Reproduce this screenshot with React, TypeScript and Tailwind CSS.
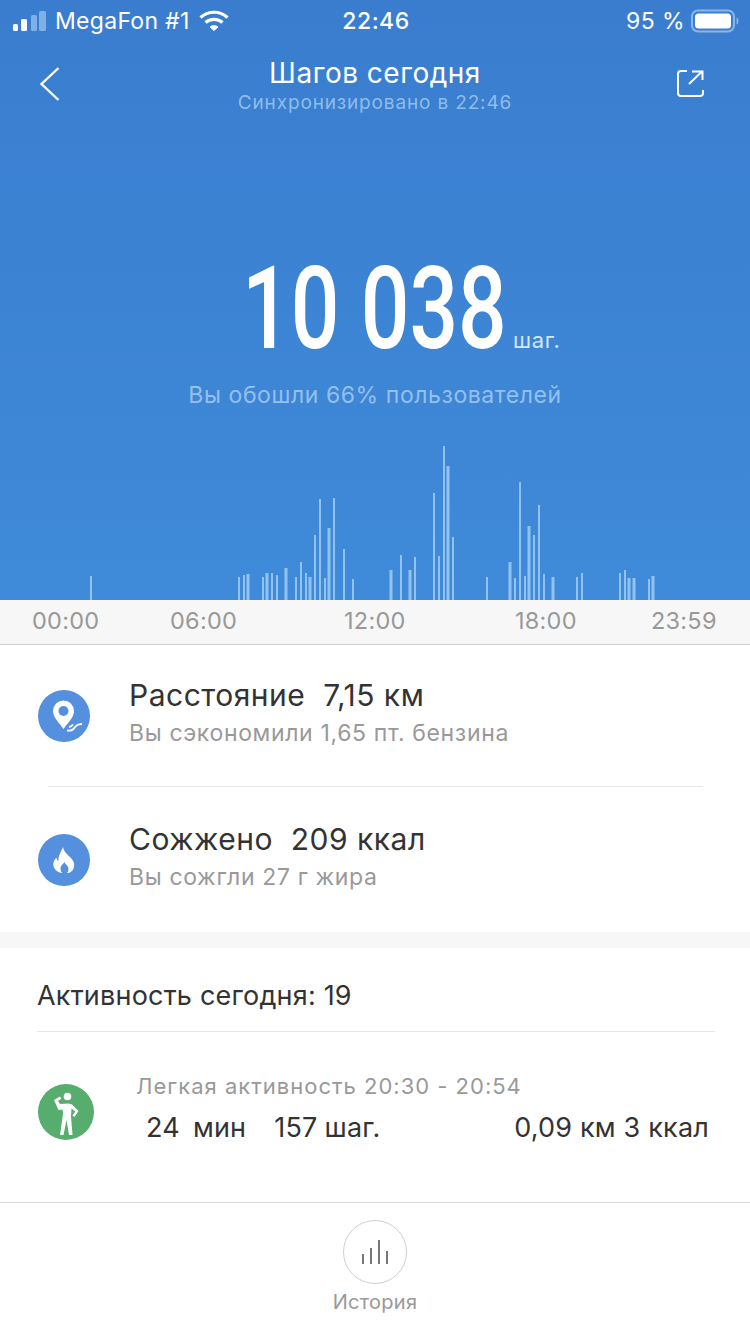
import type { ReactNode } from "react";

const bars: [number, number, number][] = [
  [91, 2, 576], [239, 2, 577], [244, 2, 575], [248, 3, 574], [263, 2, 577], [267, 3, 573], [272, 2, 573], [277, 2, 575],
  [286, 3, 568], [296, 2, 577], [301, 2, 562], [306, 2, 573], [310, 3, 577], [315, 2, 535], [320, 2, 499], [325, 2, 578],
  [329, 3, 528], [334, 2, 498], [344, 2, 549], [353, 2, 579], [391, 3, 570], [401, 2, 555], [410, 3, 570], [415, 2, 557],
  [434, 2, 493], [439, 2, 556], [444, 2, 446], [448, 3, 466], [453, 2, 537], [487, 2, 577], [510, 3, 562], [515, 2, 578],
  [520, 2, 482], [525, 2, 576], [529, 3, 526], [534, 2, 535], [539, 2, 505], [544, 2, 574], [553, 3, 577], [577, 2, 577],
  [582, 2, 573], [620, 2, 573], [625, 2, 570], [629, 3, 578], [634, 3, 578], [649, 2, 579], [653, 3, 576],
];

function StatusBar() {
  return (
    <div className="flex h-10 items-center justify-between pl-[13px] pr-[11px] pt-[2px] text-white">
      <div className="flex w-[300px] items-center">
        <svg width="34" height="22" viewBox="0 0 34 22">
          <rect x="0" y="14" width="5" height="7" rx="1.5" fill="#fff" />
          <rect x="8" y="9" width="6" height="12" rx="1.5" fill="#fff" />
          <rect x="18" y="5" width="6" height="16" rx="1.5" fill="#7fb0e6" />
          <rect x="26" y="1" width="7" height="20" rx="1.5" fill="#7fb0e6" />
        </svg>
        <span className="ml-[8px] text-[23px] leading-none tracking-[0.3px]">MegaFon #1</span>
        <svg className="ml-[9px]" width="30" height="22" viewBox="0 0 30 22" fill="none" stroke="#fff" strokeWidth="3.2">
          <path d="M1.5 7.5C9 .5 21 .5 28.5 7.5" />
          <path d="M6.5 12.5C11 8.3 19 8.3 23.5 12.5" />
          <path d="M11 17 15 20.5 19 17C17 15.2 13 15.2 11 17Z" fill="#fff" stroke="#fff" strokeWidth="1" />
        </svg>
      </div>
      <span className="text-[23px] font-medium leading-none tracking-[0.5px]">22:46</span>
      <div className="flex w-[300px] items-center justify-end">
        <span className="text-[23px] leading-none tracking-[0.4px]">95 %</span>
        <svg className="ml-[6px]" width="48" height="24" viewBox="0 0 48 24">
          <rect x="1" y="1.5" width="42" height="21" rx="6" fill="none" stroke="#8bb6e8" strokeWidth="2" />
          <rect x="4" y="4.5" width="36" height="15" rx="3.5" fill="#fff" />
          <path d="M45.5 8.5c1.5.5 2 2 2 3.5s-.5 3-2 3.5z" fill="#8bb6e8" />
        </svg>
      </div>
    </div>
  );
}

function NavBar() {
  return (
    <div className="flex h-[78px] justify-between px-[39px]">
      <div className="w-[60px] pt-[26px]">
        <svg width="22" height="36" viewBox="0 0 22 36" fill="none" stroke="#fff" strokeWidth="2.4">
          <path d="M19.5 2 2.5 18 19.5 34" />
        </svg>
      </div>
      <div className="flex flex-col items-center pt-[15px]">
        <span className="text-[28px] leading-[36px] tracking-[0.5px] text-white">Шагов сегодня</span>
        <span className="mt-[1px] text-[19px] leading-[22px] tracking-[0.85px] text-[#8fbcec]">Синхронизировано в 22:46</span>
      </div>
      <div className="flex w-[60px] justify-end pr-[7px] pt-[30px]">
        <svg width="27" height="27" viewBox="0 0 27 27" fill="none" stroke="#fff" strokeWidth="2">
          <path d="M10 1H4a3 3 0 0 0-3 3V23a3 3 0 0 0 3 3H23a3 3 0 0 0 3-3V20" />
          <path d="M12 14 25 1.500M15 1.500H25.500V10" />
        </svg>
      </div>
    </div>
  );
}

function Hero() {
  return (
    <div className="relative h-[600px] bg-gradient-to-b from-[#3a7dcf] to-[#3f8ad9]">
      <StatusBar />
      <NavBar />
      <div className="mt-[146px] flex h-[110px] items-end pl-[242px]">
        <div className="h-[130px] w-[260px] flex-none">
          <span className="block origin-left scale-x-[0.745] whitespace-nowrap font-['Roboto',sans-serif] text-[115px] font-medium leading-[130px] text-white">
            10 038
          </span>
        </div>
        <span className="mb-[22px] ml-[11px] text-[22px] leading-6 tracking-[0.6px] text-[#d5e6f8]">шаг.</span>
      </div>
      <div className="mt-[6px] text-center text-[23px] leading-[30px] tracking-[0.57px] text-[#94c0ee]">
        Вы обошли 66% пользователей
      </div>
      <svg className="absolute left-0 top-0" width="750" height="600" viewBox="0 0 750 600">
        {bars.map(([x, w, top]) => (
          <rect key={x} x={x - w / 2} y={top} width={w} height={600 - top} fill="#92c2f0" />
        ))}
      </svg>
    </div>
  );
}

function TimeAxis() {
  return (
    <div className="flex h-[45px] items-center border-b border-[#cccccc] bg-[#f7f7f7] pb-[3px] text-[23.500px] tracking-[0.25px] text-[#999999]">
      <span className="w-[170px] pl-[32px]">00:00</span>
      <span className="w-[174px]">06:00</span>
      <span className="w-[171px]">12:00</span>
      <span className="w-[136px]">18:00</span>
      <span>23:59</span>
    </div>
  );
}

function PinIcon() {
  return (
    <svg width="52" height="52" viewBox="0 0 52 52">
      <circle cx="26" cy="26" r="26" fill="#5490de" />
      <path fillRule="evenodd" fill="#fff" d="M25.500 39C22 33.500 15 28 15 21a10.500 10.500 0 0 1 21 0C36 28 29 33.500 25.500 39ZM25.500 16a5 5 0 1 0 0 10 5 5 0 0 0 0-10Z" />
      <path d="M29 40.500c3 .5 5 0 6.500-1.500s2-3.500 5-4.500c1.500-.5 2.500-.5 3.500-.5M31 37c1.500 0 3-1 4-2.500" fill="none" stroke="#fff" strokeWidth="1.800" />
    </svg>
  );
}

function FlameIcon() {
  return (
    <svg width="52" height="52" viewBox="0 0 52 52">
      <circle cx="26" cy="26" r="26" fill="#5490de" />
      <path fillRule="evenodd" fill="#fff" d="M25 13c1 5 4 7 7 10 3 3 5 6 4 10-1 4-4 6-7 6 2-2 2-5 .5-7-1-1.500-2.500-2-3-4-1.500 2-4 3.500-4 7 0 2 1 3 2 4-4 0-8-3-9-7-.8-4 1.500-7 3-8.500 0 2 1 3 2 3.500C20 22 23 18 25 13Z" />
    </svg>
  );
}

function WalkerIcon() {
  return (
    <svg width="56" height="56" viewBox="0 0 56 56">
      <circle cx="28" cy="28" r="28" fill="#56ad6d" />
      <circle cx="29.500" cy="12.500" r="3.800" fill="#fff" />
      <path fill="#fff" d="M16 16l6-3.500 1.300 2.200-3.300 2.300 2 3 8.500-.500 3.500 1 6.500 6.500-4 6-2-1.500 2.800-4-3.800-3-.5 8 1.500 18.500h-3.500l-2.500-15-3 15H22l3-21-.5-4.500-4 .5z" />
    </svg>
  );
}

function Stat({ icon, title, sub, h }: { icon: ReactNode; title: string; sub: string; h: string }) {
  return (
    <div className={`flex items-center pl-[38px] ${h}`}>
      {icon}
      <div className="ml-[39px] pb-[9px]">
        <div className="whitespace-pre text-[30px] leading-[38px] tracking-[0.5px] text-[#333333]">{title}</div>
        <div className="mt-[5px] text-[23px] leading-[28px] tracking-[0.65px] text-[#999999]">{sub}</div>
      </div>
    </div>
  );
}

function Stats() {
  return (
    <div className="bg-white">
      <Stat h="h-[141px]" icon={<PinIcon />} title="Расстояние  7,15 км" sub="Вы сэкономили 1,65 пт. бензина" />
      <div className="ml-[48px] mr-[47px] h-px bg-[#e8e8e8]" />
      <Stat h="h-[145px]" icon={<FlameIcon />} title="Сожжено  209 ккал" sub="Вы сожгли 27 г жира" />
    </div>
  );
}

function Activity() {
  return (
    <div className="h-[254px] bg-white pl-[37px] pr-[35px]">
      <div className="flex h-[84px] items-center border-b border-[#e8e8e8] pt-[13px] text-[27px] tracking-[0.2px] text-[#333333]">
        Активность сегодня: 19
      </div>
      <div className="flex pt-[40px]">
        <div className="ml-[1px] mt-[12px] flex-none">
          <WalkerIcon />
        </div>
        <div className="ml-[42px] flex-1">
          <div className="text-[22px] leading-[28px] tracking-[1px] text-[#999999]">Легкая активность 20:30 - 20:54</div>
          <div className="mr-[6px] mt-[11px] flex justify-between whitespace-nowrap pl-[10px] text-[27px] leading-[34px] tracking-[0.2px] text-[#333333]">
            <div className="flex">
              <span>24</span>
              <span className="ml-[13px]">мин</span>
              <span className="ml-[28px]">157</span>
              <span className="ml-[7px]">шаг.</span>
            </div>
            <span>0,09 км 3 ккал</span>
          </div>
        </div>
      </div>
    </div>
  );
}

function BottomBar() {
  return (
    <div className="flex h-[132px] flex-col items-center border-t border-[#d9d9d9] bg-white pt-[17px]">
      <div className="flex h-[64px] w-[64px] items-center justify-center rounded-full border border-[#d0d0d0]">
        <svg width="28" height="26" viewBox="0 0 28 26" fill="#777777">
          <rect x="1" y="15" width="2" height="10" />
          <rect x="9" y="9" width="2" height="16" />
          <rect x="17" y="1" width="2" height="24" />
          <rect x="25" y="12" width="2" height="13" />
        </svg>
      </div>
      <span className="mt-[5px] text-[20px] leading-[26px] tracking-[0.3px] text-[#999999]">История</span>
    </div>
  );
}

export default function App() {
  return (
    <div className="h-[1334px] w-[750px] overflow-hidden bg-[#f7f7f7] font-['Inter','Noto_Sans',sans-serif]">
      <Hero />
      <TimeAxis />
      <Stats />
      <div className="h-[16px]" />
      <Activity />
      <BottomBar />
    </div>
  );
}
